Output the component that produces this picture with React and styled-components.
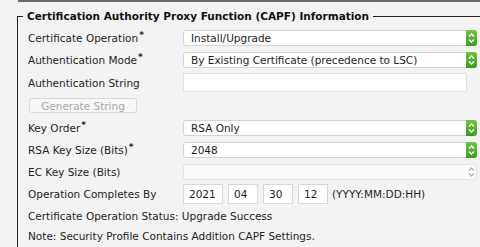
import React from "react";
import styled, { createGlobalStyle } from "styled-components";

const Global = createGlobalStyle`
  html, body { margin: 0; padding: 0; background: #f3f3f3; overflow: hidden; }
  body { font-family: "DejaVu Sans", Verdana, sans-serif; font-size: 10.5px; color: #1e1e1e; }
`;

const Page = styled.div`
  width: 480px;
  height: 247px;
  padding-left: 17px;
  box-sizing: border-box;
  overflow: hidden;
`;

const TopRule = styled.div`
  height: 2px;
  margin-left: 1px;
  background: #6a6a6a;
`;

const Fieldset = styled.fieldset`
  margin: 7px 0 0 0;
  width: 500px;
  box-sizing: border-box;
  border: 1px solid #222;
  border-right: none;
  border-bottom: none;
  padding: 4px 0 0 10px;
  min-height: 260px;
`;

const Legend = styled.legend`
  margin-left: -5px;
  padding: 0 4px;
  font-weight: bold;
  font-size: 10.5px;
  line-height: 14px;
  color: #111;
`;

const Form = styled.div`
  display: flex;
  flex-direction: column;
`;

const Row = styled.div`
  display: grid;
  grid-template-columns: 155px auto;
  align-items: center;
  height: ${(p) => p.$h || 22}px;
`;

const TextRow = styled.div`
  display: flex;
  align-items: center;
  height: ${(p) => p.$h || 20}px;
`;

const Label = styled.span`
  white-space: nowrap;
`;

const Star = styled.sup`
  font-size: 9px;
  font-weight: bold;
  vertical-align: 4px;
  line-height: 0;
  margin-left: 1px;
`;

const SelectBox = styled.div`
  width: 294px;
  height: 16px;
  box-sizing: border-box;
  display: flex;
  align-items: center;
  background: ${(p) => (p.$disabled ? "#fafafa" : "#fff")};
  border: 1px solid ${(p) => (p.$disabled ? "#e2e2e2" : "#d4d4d4")};
  border-radius: 3px;
  position: relative;
`;

const SelectValue = styled.span`
  flex: 1;
  padding-left: 7px;
  white-space: nowrap;
  overflow: hidden;
`;

const ArrowButton = styled.span`
  width: 11px;
  height: 16px;
  margin: -1px -1px -1px 0;
  display: flex;
  align-items: center;
  justify-content: center;
  border-radius: 0 3px 3px 0;
  background: ${(p) =>
    p.$disabled ? "transparent" : "linear-gradient(#6fc544, #3d9b1c)"};
`;

const TextInput = styled.div`
  width: 284px;
  height: 19px;
  box-sizing: border-box;
  background: #fff;
  border: 1px solid #e0e0e0;
`;

const Button = styled.div`
  width: 108px;
  height: 15px;
  margin-left: 1px;
  box-sizing: border-box;
  border: 1px solid #d8d8d8;
  border-radius: 3px;
  background: #f7f7f7;
  color: #a9a9a9;
  display: flex;
  align-items: center;
  justify-content: center;
`;

const DateGroup = styled.div`
  display: flex;
  align-items: center;
  gap: 5px;
`;

const DateBox = styled.div`
  width: ${(p) => p.$w}px;
  height: 20px;
  box-sizing: border-box;
  background: #fff;
  border: 1px solid #d8d8d8;
  display: flex;
  align-items: center;
  padding-left: 5px;
`;

const Hint = styled.span`
  margin-left: -1px;
`;

function Chevrons({ disabled }) {
  const c = disabled ? "#b5b5b5" : "#fff";
  return (
    <svg width="9" height="14" viewBox="0 0 9 14">
      <path d="M2 5.5 L4.5 3 L7 5.5" fill="none" stroke={c} strokeWidth="1.4" />
      <path d="M2 8.5 L4.5 11 L7 8.5" fill="none" stroke={c} strokeWidth="1.4" />
    </svg>
  );
}

function Select({ value, disabled }) {
  return (
    <SelectBox $disabled={disabled}>
      <SelectValue>{value}</SelectValue>
      <ArrowButton $disabled={disabled}>
        <Chevrons disabled={disabled} />
      </ArrowButton>
    </SelectBox>
  );
}

export default function App() {
  return (
    <>
      <Global />
      <Page>
        <TopRule />
        <Fieldset>
          <Legend>Certification Authority Proxy Function (CAPF) Information</Legend>
          <Form>
            <Row $h={22}>
              <Label>Certificate Operation<Star>*</Star></Label>
              <Select value="Install/Upgrade" />
            </Row>
            <Row $h={22}>
              <Label>Authentication Mode<Star>*</Star></Label>
              <Select value="By Existing Certificate (precedence to LSC)" />
            </Row>
            <Row $h={23}>
              <Label>Authentication String</Label>
              <TextInput />
            </Row>
            <TextRow $h={23}>
              <Button>Generate String</Button>
            </TextRow>
            <Row $h={22}>
              <Label>Key Order<Star>*</Star></Label>
              <Select value="RSA Only" />
            </Row>
            <Row $h={22}>
              <Label>RSA Key Size (Bits)<Star>*</Star></Label>
              <Select value="2048" />
            </Row>
            <Row $h={21}>
              <Label>EC Key Size (Bits)</Label>
              <Select value="" disabled />
            </Row>
            <Row $h={23}>
              <Label>Operation Completes By</Label>
              <DateGroup>
                <DateBox $w={40}>2021</DateBox>
                <DateBox $w={30}>04</DateBox>
                <DateBox $w={30}>30</DateBox>
                <DateBox $w={30}>12</DateBox>
                <Hint>(YYYY:MM:DD:HH)</Hint>
              </DateGroup>
            </Row>
            <TextRow $h={21}>Certificate Operation Status: Upgrade Success</TextRow>
            <TextRow $h={20}>Note: Security Profile Contains Addition CAPF Settings.</TextRow>
          </Form>
        </Fieldset>
      </Page>
    </>
  );
}
